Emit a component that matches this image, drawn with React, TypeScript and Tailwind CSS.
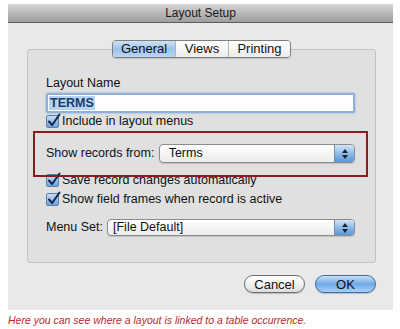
import React from 'react';

const font = { fontFamily: '"Liberation Sans", Arial, sans-serif' };

const Checkbox: React.FC = () => (
  <span className="relative inline-flex w-[13px] h-[13px] shrink-0 rounded-[2px] border border-[#5a7fa8] bg-gradient-to-b from-[#c6def5] to-[#6fa2d8]">
    {/* check mark pokes out of the box like the aqua one */}
    <svg className="absolute -top-[3px] left-0" width="14" height="15" viewBox="0 0 14 15">
      <path d="M2 8.5 L5.2 12 L12.5 1.5" fill="none" stroke="#10264a" strokeWidth="2" strokeLinecap="round" strokeLinejoin="round" />
    </svg>
  </span>
);

const CheckRow: React.FC<{ label: string }> = ({ label }) => (
  <div className="flex items-center gap-[3px] h-[14px] text-[12.5px] text-[#111]">
    <Checkbox />
    <span className="leading-none">{label}</span>
  </div>
);

const Stepper: React.FC = () => (
  <div className="w-[20px] h-full flex flex-col items-center justify-center gap-[2px] border-l border-[#6d8fb8] bg-gradient-to-b from-[#d4e6f8] via-[#8fbbe8] to-[#5b95d4]">
    <svg width="6" height="4" viewBox="0 0 6 4"><path d="M3 0 L6 4 L0 4 Z" fill="#1b2433" /></svg>
    <svg width="6" height="4" viewBox="0 0 6 4"><path d="M0 0 L6 0 L3 4 Z" fill="#1b2433" /></svg>
  </div>
);

const Popup: React.FC<{ value: string; className: string }> = ({ value, className }) => (
  <div className={`flex items-stretch rounded-[4px] border border-[#8c8c8c] overflow-hidden bg-gradient-to-b from-white to-[#ececec] shadow-[0_1px_1px_rgba(0,0,0,0.15)] ${className}`}>
    <span className="flex-1 flex items-center text-[12.5px] text-[#111]">{value}</span>
    <Stepper />
  </div>
);

export default function App() {
  return (
    <div className="relative w-[400px] h-[329px] bg-white overflow-hidden" style={font}>
      <div className="pt-[4px] pl-[8px]">
        <div className="w-[385px]">
          {/* title bar */}
          <div className="h-[19px] flex items-center justify-center border-b border-[#5e5e5e] bg-gradient-to-b from-[#d6d6d6] via-[#b8b8b8] to-[#9f9f9f] text-[12px] text-[#1a1a1a]">
            Layout Setup
          </div>

          {/* window body */}
          <div className="h-[287px] bg-[#e9e9e9] pt-[17px] pl-[19px] pr-[17px]">
            <div className="relative z-10 flex justify-center">
              <div className="flex h-[18px] rounded-[4px] border border-[#7f7f7f] overflow-hidden text-[13px] text-[#111] shadow-[0_1px_1px_rgba(0,0,0,0.15)]">
                <div className="w-[62px] flex items-center justify-center bg-gradient-to-b from-[#cfe3f7] via-[#9cc4ec] to-[#b9d6f4]">General</div>
                <div className="w-[53px] flex items-center justify-center border-l border-[#b5b5b5] bg-gradient-to-b from-white to-[#ececec]">Views</div>
                <div className="w-[62px] flex items-center justify-center border-l border-[#b5b5b5] bg-gradient-to-b from-white to-[#ececec]">Printing</div>
              </div>
            </div>

            {/* group box */}
            <div className="-mt-[9px] h-[214px] rounded-[3px] border border-[#c2c2c2] bg-[#e0e0e0] pt-[25px] pl-[18px] pr-[20px]">
              <div className="h-[16px] flex items-center text-[12.5px] text-[#111]">Layout Name</div>
              <div className="mt-[2px] h-[20px] rounded-[2px] border-2 border-[#8db2dc] bg-white shadow-[0_0_2px_#6f9bd0] flex items-center pl-[1px]">
                <span className="bg-[#b5d3f3] text-[12.5px] font-bold leading-[14px] text-[#1c3c66] px-[1px]">TERMS</span>
              </div>
              <div className="mt-[1px]">
                <CheckRow label="Include in layout menus" />
              </div>

              <div className="mt-[16px] flex items-center h-[19px]">
                <span className="text-[12.5px] text-[#111] w-[113px]">Show records from:</span>
                <Popup value="Terms" className="w-[197px] h-[19px] pl-[9px]" />
              </div>

              <div className="mt-[10px]">
                <CheckRow label="Save record changes automatically" />
              </div>
              <div className="mt-[5px]">
                <CheckRow label="Show field frames when record is active" />
              </div>

              <div className="mt-[13px] flex items-center h-[17px]">
                <span className="text-[12.5px] text-[#111] w-[61px]">Menu Set:</span>
                <Popup value="[File Default]" className="w-[248px] h-[17px] pl-[5px]" />
              </div>
            </div>

            {/* buttons */}
            <div className="mt-[12px] flex justify-end gap-[10px]">
              <button className="w-[61px] h-[18px] rounded-full border border-[#6f6f6f] bg-gradient-to-b from-white via-[#f2f2f2] to-[#dcdcdc] text-[13px] text-[#111] leading-none shadow-[0_1px_1px_rgba(0,0,0,0.2)]">
                Cancel
              </button>
              <button className="w-[61px] h-[18px] rounded-full border border-[#3d6da6] bg-gradient-to-b from-[#c9e1f8] via-[#6fa9e6] to-[#a8d0f6] text-[13px] text-[#111] leading-none shadow-[0_1px_1px_rgba(0,0,0,0.2)]">
                OK
              </button>
            </div>
          </div>
        </div>
      </div>

      <p className="mt-[3px] pl-[8px] text-[10.5px] italic text-[#c1272d]">
        Here you can see where a layout is linked to a table occurrence.
      </p>

      {/* red annotation box drawn over the dialog */}
      <div className="absolute left-[33px] top-[131px] w-[335px] h-[46px] border-2 border-[#8e1a1e] pointer-events-none" />
    </div>
  );
}
